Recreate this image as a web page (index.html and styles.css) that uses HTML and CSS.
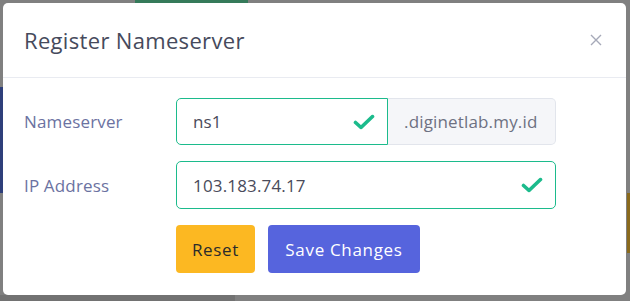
FILE: index.html
```html
<!DOCTYPE html>
<html lang="en">
<head>
    <meta charset="UTF-8">
    <meta name="viewport" content="width=device-width, initial-scale=1.0">
    <title>Register Nameserver</title>
    <link rel="stylesheet" href="styles.css">
</head>
<body>
    <!-- page behind the backdrop -->
    <div class="page-behind">
        <div class="bg-tab"></div>
        <div class="bg-side"></div>
        <div class="bg-badge"></div>
        <div class="bg-footer"></div>
    </div>

    <div class="modal">
        <div class="modal-header">
            <h2 class="modal-title">Register Nameserver</h2>
            <button class="close" type="button" aria-label="Close">
                <svg width="12" height="12" viewBox="0 0 12 12">
                    <path d="M1 1L11 11M11 1L1 11" stroke="#a6a9b8" stroke-width="1.4" fill="none"/>
                </svg>
            </button>
        </div>

        <div class="modal-body">
            <div class="form-row">
                <label class="form-label" for="ns">Nameserver</label>
                <div class="input-group">
                    <div class="field field-ns">
                        <input id="ns" class="form-control is-valid" type="text" value="ns1">
                        <svg class="valid-icon" width="22" height="15" viewBox="0 0 22 15">
                            <path d="M2.5 8L8 13L19.5 2" stroke="#1cbb8c" stroke-width="3.6" stroke-linecap="round" stroke-linejoin="round" fill="none"/>
                        </svg>
                    </div>
                    <span class="addon">.diginetlab.my.id</span>
                </div>
            </div>

            <div class="form-row">
                <label class="form-label" for="ip">IP Address</label>
                <div class="field field-ip">
                    <input id="ip" class="form-control is-valid full" type="text" value="103.183.74.17">
                    <svg class="valid-icon" width="22" height="15" viewBox="0 0 22 15">
                        <path d="M2.5 8L8 13L19.5 2" stroke="#1cbb8c" stroke-width="3.6" stroke-linecap="round" stroke-linejoin="round" fill="none"/>
                    </svg>
                </div>
            </div>

            <div class="form-row">
                <span class="form-label"></span>
                <div class="actions">
                    <button class="btn btn-warning" type="reset">Reset</button>
                    <button class="btn btn-primary" type="submit">Save Changes</button>
                </div>
            </div>
        </div>
    </div>
</body>
</html>
```

FILE: styles.css
```css
body {
    margin: 0;
    padding: 3px 4px 6px 3px;
    background-color: #808080;
    font-family: 'Open Sans', 'Noto Sans', sans-serif;
    letter-spacing: 0.01em;
    color: #495057;
    position: relative;
    height: 301px;
    box-sizing: border-box;
    overflow: hidden;
}

.page-behind div {
    position: absolute;
}

.bg-tab {
    left: 135px;
    top: 0;
    width: 113px;
    height: 3px;
    background-color: #357a5a;
}

.bg-side {
    left: 0;
    top: 87px;
    width: 3px;
    height: 106px;
    background-color: #2e3f7a;
}

.bg-badge {
    right: 0;
    top: 193px;
    width: 3px;
    height: 60px;
    background-color: #8a6a1c;
}

.bg-footer {
    left: 0;
    bottom: 0;
    width: 235px;
    height: 6px;
    background-color: #727272;
}

.modal {
    position: relative;
    background-color: #fff;
    border-radius: 5px;
    height: 292px;
    display: flex;
    flex-direction: column;
}

.modal-header {
    display: flex;
    align-items: center;
    justify-content: space-between;
    height: 75px;
    padding: 0 24px 0 21px;
    border-bottom: 1px solid #e9ebf1;
    box-sizing: border-box;
}

.modal-title {
    margin: 0;
    font-size: 22px;
    font-weight: 500;
    letter-spacing: 0.015em;
    color: #464a5c;
}

.close {
    background: none;
    border: none;
    padding: 0;
    display: flex;
    cursor: pointer;
}

.modal-body {
    padding: 20px 21px 20px;
    display: flex;
    flex-direction: column;
    gap: 16px;
}

.form-row {
    display: flex;
    align-items: center;
}

.form-label {
    width: 152px;
    flex: none;
    font-size: 17px;
    color: #6b72a1;
}

.input-group {
    display: flex;
}

.field {
    position: relative;
    display: flex;
}

.form-control {
    height: 48px;
    box-sizing: border-box;
    padding: 0 40px 0 16px;
    font-family: inherit;
    font-size: 17px;
    letter-spacing: inherit;
    color: #4a4b5a;
    border: 1px solid #1cbb8c;
    border-radius: 5px;
    outline: none;
    background: #fff;
}

.field-ns .form-control {
    width: 212px;
    height: 47px;
    border-radius: 5px 0 0 5px;
}

.field-ip .form-control {
    width: 380px;
}

.valid-icon {
    position: absolute;
    right: 13px;
    top: 50%;
    transform: translateY(-50%);
}

.addon {
    display: flex;
    align-items: center;
    width: 168px;
    height: 47px;
    box-sizing: border-box;
    padding-left: 16px;
    background-color: #f5f6f9;
    border: 1px solid #e2e5ec;
    border-left: none;
    border-radius: 0 5px 5px 0;
    font-size: 17px;
    color: #6e7182;
}

.actions {
    display: flex;
    gap: 13px;
}

.btn {
    height: 48px;
    border: none;
    border-radius: 4px;
    font-family: inherit;
    font-size: 17px;
    letter-spacing: 0.04em;
    padding: 0;
    cursor: pointer;
}

.btn-warning {
    background-color: #fcb822;
    color: #2b2b2b;
    width: 79px;
}

.btn-primary {
    background-color: #5664dd;
    color: #fff;
    width: 152px;
}
```
